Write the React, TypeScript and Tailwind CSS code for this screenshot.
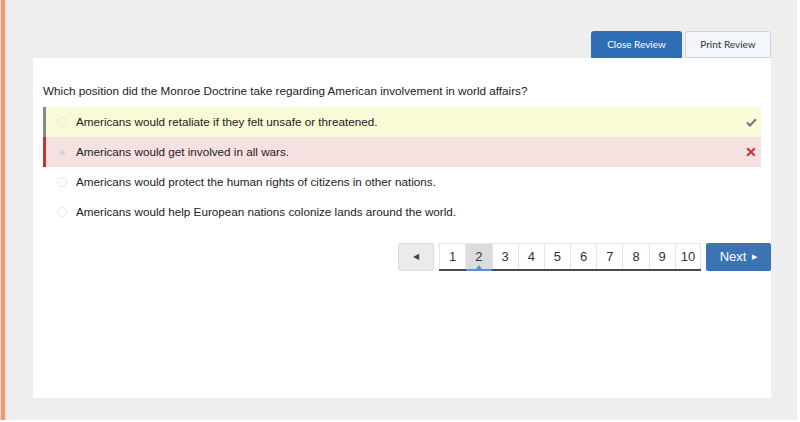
import React from 'react';

const answers = [
  { text: 'Americans would retaliate if they felt unsafe or threatened.', state: 'correct' },
  { text: 'Americans would get involved in all wars.', state: 'wrong' },
  { text: 'Americans would protect the human rights of citizens in other nations.', state: 'none' },
  { text: 'Americans would help European nations colonize lands around the world.', state: 'none' },
];

function Check() {
  return (
    <svg width="11" height="9" viewBox="0 0 11 9">
      <path d="M1 4.5 L4 7.5 L10 1.2" fill="none" stroke="#7a7a7a" strokeWidth="2.2" />
    </svg>
  );
}

function Cross() {
  return (
    <svg width="10" height="10" viewBox="0 0 10 10">
      <path d="M1.2 1.2 L8.8 8.8 M8.8 1.2 L1.2 8.8" fill="none" stroke="#cc2f35" strokeWidth="2" />
    </svg>
  );
}

function AnswerRow({ text, state }: { text: string; state: string }) {
  const bg =
    state === 'correct'
      ? 'bg-[#fafad6] border-[#8a8a8a]'
      : state === 'wrong'
        ? 'bg-[#f5e1e0] border-[#c9303a]'
        : 'bg-white border-transparent';
  return (
    <div className={`flex items-center h-[30px] border-l-[3px] ${bg}`}>
      <div className="w-[10px] h-[10px] rounded-full border border-[#e6e6e6] ml-[11px] flex items-center justify-center">
        {state === 'wrong' && <div className="w-[5px] h-[5px] rounded-full bg-[#e0d0d0]" />}
      </div>
      <span className="ml-[9px] text-[11.7px] text-[#222]">{text}</span>
      <div className="ml-auto mr-[4px] w-[12px] flex justify-center">
        {state === 'correct' && <Check />}
        {state === 'wrong' && <Cross />}
      </div>
    </div>
  );
}

export default function App() {
  const pages = [1, 2, 3, 4, 5, 6, 7, 8, 9, 10];
  return (
    <div className="w-[800px] h-[422px] bg-white" style={{ fontFamily: '"Liberation Sans", Arial, sans-serif' }}>
      <div className="flex h-[420px] w-[797px] bg-[#eeeeee]">
        <div className="w-[1px] bg-[#f3d3c6]" />
        <div className="w-[4px] bg-[#e8987c]" />
        <div className="w-[2px] bg-[#f7e0d6]" />
        <div className="flex flex-col ml-[26px] pt-[31px]">
          <div className="flex justify-end gap-[3px]" style={{ fontFamily: 'Lato, sans-serif' }}>
            <button className="w-[91px] h-[27px] rounded-t-[3px] bg-[#2f6db5] text-white text-[10px]">Close Review</button>
            <button className="w-[86px] h-[27px] rounded-t-[3px] bg-[#f3f6fa] border border-[#cfd3d8] text-[#333] text-[10px]">Print Review</button>
          </div>
          <div className="w-[738px] h-[340px] bg-white pl-[10px] pt-[25px]">
            <p className="text-[11.7px] text-[#222] leading-[16px]">
              Which position did the Monroe Doctrine take regarding American involvement in world affairs?
            </p>
            <div className="mt-[8px] mr-[10px] flex flex-col">
              {answers.map(a => (
                <AnswerRow key={a.text} text={a.text} state={a.state} />
              ))}
            </div>
            <div className="flex justify-end items-start mt-[16px] gap-[5px]">
              <button className="w-[36px] h-[28px] bg-[#ebebeb] border border-[#dcdcdc] rounded-[2px] text-[#444] text-[8px]">◀</button>
              <div className="flex border-b-2 border-[#4a4a4a] border-t border-t-[#e6e6e6] h-[28px]">
                {pages.map(p => (
                  <div
                    key={p}
                    className={`relative w-[26.2px] flex items-center justify-center text-[13px] text-[#333] border-l border-[#e6e6e6] last:border-r ${p === 2 ? 'bg-[#dcdcdc]' : 'bg-white'}`}
                  >
                    {p}
                    {p === 2 && (
                      <>
                        <div className="absolute bottom-[-2px] left-0 right-0 h-[2px] bg-[#5b8fd0]" />
                        <div className="absolute bottom-0 left-[10px] w-0 h-0 border-l-[3px] border-r-[3px] border-b-[4px] border-l-transparent border-r-transparent border-b-[#5b8fd0]" />
                      </>
                    )}
                  </div>
                ))}
              </div>
              <button className="w-[65px] h-[28px] bg-[#3a74b3] text-white text-[13px] rounded-[2px] flex items-center justify-center gap-[6px]">
                Next <span className="text-[7px]">▶</span>
              </button>
            </div>
          </div>
        </div>
      </div>
    </div>
  );
}
